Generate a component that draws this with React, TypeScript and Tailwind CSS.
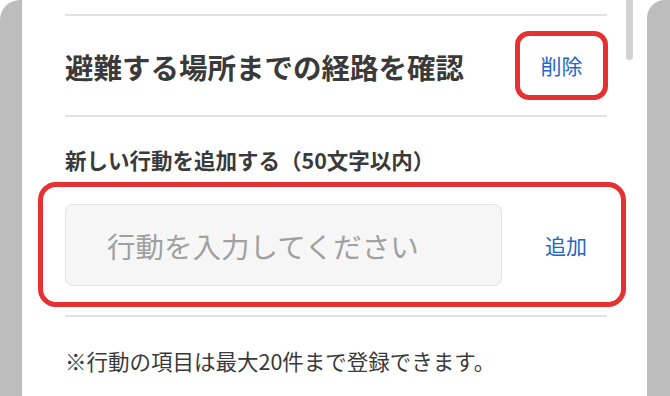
import React from 'react';

const font = { fontFamily: '"Noto Sans CJK JP", "Noto Sans", sans-serif' };

export default function App() {
  return (
    <div className="flex w-[670px] h-[396px] bg-white overflow-hidden" style={font}>
      <div className="w-[22px] shrink-0 bg-[#bdbdbd] rounded-tl-[20px]" />
      <div className="relative flex-1 bg-white pl-[43px] pr-[40px] pt-[14px]">
        {/* scrollbar thumb */}
        <div className="absolute right-[14px] top-0 w-[7px] h-[60px] rounded-b-full bg-[#d2d2d2]" />

        <div className="h-[2px] bg-[#e2e2e2]" />

        <div className="flex items-center justify-between h-[99px]">
          <h2 className="text-[28.5px] font-bold leading-none text-[#3a3a3a] pt-[3px]">
            避難する場所までの経路を確認
          </h2>
          <button className="w-[93px] h-[69px] -mr-[1px] rounded-[14px] border-[5px] border-[#e53131] text-[21px] text-[#2366c9] leading-none">
            削除
          </button>
        </div>

        <div className="h-[2px] bg-[#e2e2e2]" />

        <p className="pt-[29px] text-[21.5px] font-bold leading-[28px] text-[#3a3a3a]">
          新しい行動を追加する（50文字以内）
        </p>

        <div className="mt-[8px] -ml-[27px] -mr-[19px] h-[125px] rounded-[18px] border-[5px] border-[#e53131] pl-[22px] pt-[17px]">
          <div className="flex items-center">
            <input
              placeholder="行動を入力してください"
              className="w-[437px] h-[82px] rounded-[8px] border-[1.5px] border-[#e3e3e3] bg-[#f6f6f6] pl-[41px] text-[28.5px] text-[#333] placeholder:text-[#a0a0a0] outline-none"
              style={font}
            />
            <button className="ml-[43px] text-[21px] text-[#2366c9] leading-none">追加</button>
          </div>
        </div>

        <div className="mt-[8px] h-[2px] bg-[#e2e2e2]" />

        <p className="pt-[29px] text-[21.5px] leading-[30px] text-[#3a3a3a]">
          ※行動の項目は最大20件まで登録できます。
        </p>
      </div>
      <div className="w-[23px] shrink-0 bg-[#bdbdbd] rounded-tl-[18px]" />
    </div>
  );
}
